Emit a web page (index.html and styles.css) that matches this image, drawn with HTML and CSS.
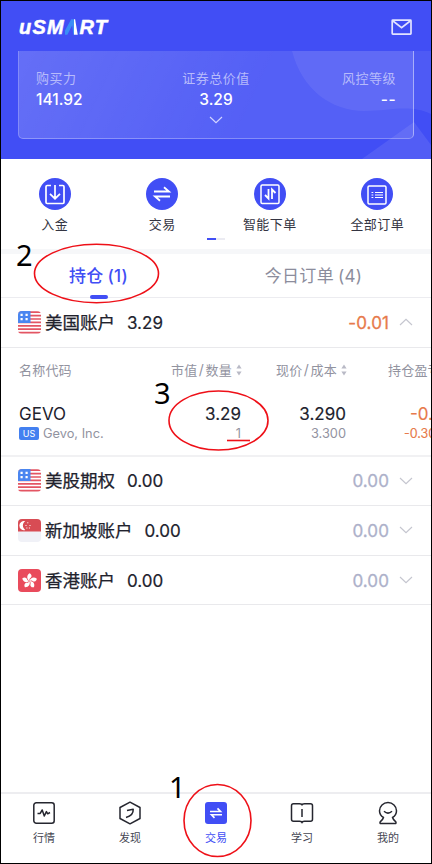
FILE: index.html
```html
<!DOCTYPE html>
<html lang="zh-CN">
<head>
<meta charset="utf-8">
<title>uSMART</title>
<link rel="stylesheet" href="styles.css">
</head>
<body>
<svg width="0" height="0" class="defs">
  <defs>
    <clipPath id="flagclip"><rect width="23" height="23" rx="4"/></clipPath>
    <symbol id="us" viewBox="0 0 23 23">
      <g clip-path="url(#flagclip)">
        <rect width="23" height="23" fill="#fff"/>
        <path d="M0 1.2H23M0 4.6H23M0 8H23M0 11.4H23M0 14.8H23M0 18.2H23M0 21.6H23" stroke="#e35563" stroke-width="1.7"/>
        <rect width="12.5" height="12" fill="#4a86f0"/>
        <path d="M2.500 3.800h2.200M7.500 3.800h2.200M2.500 8.200h2.200M7.500 8.200h2.200" stroke="#fff" stroke-width="2.2"/>
      </g>
    </symbol>
    <symbol id="sg" viewBox="0 0 23 23">
      <g clip-path="url(#flagclip)">
        <rect width="23" height="23" fill="#f0f1f7"/>
        <rect width="23" height="12.5" fill="#d84c54"/>
        <path d="M7.3 2.2a4.6 4.6 0 1 0 0 8.8a5.2 5.2 0 0 1 0-8.8" fill="#fff"/>
        <path d="M9.3 3.8h1M7.5 6.5h1M11.5 6.5h1M8.4 9h1M10.9 9h1" stroke="#fff" stroke-width="1"/>
      </g>
    </symbol>
    <symbol id="hk" viewBox="0 0 23 23">
      <rect width="23" height="23" rx="4" fill="#e94b5c"/>
      <g fill="#fff">
        <path id="petal" d="M11.5 12C8.6 10 8.4 6.4 11.6 4.3C14.1 5.6 14 8 12.4 9.1C11.4 9.8 11.3 10.9 11.5 12"/>
        <use href="#petal" transform="rotate(72 11.5 12)"/>
        <use href="#petal" transform="rotate(144 11.5 12)"/>
        <use href="#petal" transform="rotate(216 11.5 12)"/>
        <use href="#petal" transform="rotate(288 11.5 12)"/>
      </g>
    </symbol>
    <symbol id="down" viewBox="0 0 14 8"><path d="M1 1L7 6.6L13 1" fill="none" stroke="currentColor" stroke-width="1.2"/></symbol>
    <symbol id="sort" viewBox="0 0 6 12"><path d="M3 .4L5.6 4.4H.4ZM3 11.6L5.6 7.6H.4Z" fill="#b9bac6"/></symbol>
  </defs>
</svg>
<div class="screen">
  <header class="topbar">
    <div class="logo">uSM<span class="logo-a">Λ</span>RT</div>
    <svg class="mail" width="22" height="17" viewBox="0 0 22 17" fill="none" stroke="#e2e3ff" stroke-width="1.7"><rect x="1.2" y="1.2" width="18.8" height="14" rx=".6"/><path d="M2 2L10.6 8.7L19.2 2"/></svg>
  </header>

  <section class="hero">
    <svg class="hero-art" width="430" height="108" viewBox="0 0 430 108">
      <path d="M291 0C301 39 331 60 363 60C391 60 408 53 430 63V0Z" fill="#fff" opacity=".07"/>
      <path d="M361 108L413 71L430 94V108Z" fill="#fff" opacity=".09"/>
    </svg>
    <div class="card">
      <div class="stat"><span class="stat-label">购买力</span><span class="stat-value">141.92</span></div>
      <div class="stat stat-mid"><span class="stat-label">证券总价值</span><span class="stat-value">3.29</span><svg class="expand" width="14" height="8"><use href="#down"/></svg></div>
      <div class="stat stat-end"><span class="stat-label">风控等级</span><span class="stat-value dashes">--</span></div>
    </div>
  </section>

  <section class="actions">
    <div class="action">
      <svg width="32" height="32" viewBox="0 0 32 32" fill="none" stroke="#fff" stroke-width="1.7"><circle cx="16" cy="16" r="16" fill="#414ef5" stroke="none"/><path d="M12 7.500H8.200Q7 7.500 7 8.700V24.300Q7 25.500 8.200 25.500H23.800Q25 25.500 25 24.300V8.700Q25 7.500 23.800 7.500H20M16 7V20.500M11 15.800L16 20.700L21 15.800"/></svg>
      <span>入金</span>
    </div>
    <div class="action">
      <svg width="32" height="32" viewBox="0 0 32 32" fill="none" stroke="#fff" stroke-width="1.8"><circle cx="16" cy="16" r="16" fill="#414ef5" stroke="none"/><path d="M8 13.500H23L18 9.200M24 18.500H9L14 22.800"/></svg>
      <span>交易</span>
    </div>
    <div class="action">
      <svg width="32" height="32" viewBox="0 0 32 32" fill="none" stroke="#fff" stroke-width="1.5"><circle cx="16" cy="16" r="16" fill="#414ef5" stroke="none"/><rect x="7" y="7" width="18" height="18.500" rx="1.2"/><path d="M14.500 11V20.500L11 17M18 21V11.500L21.500 15" stroke-width="1.8"/></svg>
      <span>智能下单</span>
    </div>
    <div class="action">
      <svg width="32" height="32" viewBox="0 0 32 32" fill="none" stroke="#fff" stroke-width="1.5"><circle cx="16" cy="16" r="16" fill="#414ef5" stroke="none"/><rect x="7" y="8" width="18" height="18" rx="1.2"/><path d="M10.500 14.500h1.800M14 14.500h8M10.500 17h1.800M14 17h8M10.500 19.500h1.800M14 19.500h8" stroke-width="1.200"/></svg>
      <span>全部订单</span>
    </div>
    <div class="pager"><i></i></div>
  </section>

  <nav class="tabs">
    <div class="tab tab-on">持仓<span>(1)</span></div>
    <div class="tab">今日订单<span>(4)</span></div>
  </nav>

  <div class="account">
    <svg width="23" height="23"><use href="#us"/></svg><span class="name">美国账户</span><span class="total">3.29</span><span class="change loss">-0.01</span><svg class="arrow up" width="14" height="8"><use href="#down"/></svg>
  </div>

  <section class="holdings">
    <div class="line head">
      <span>名称代码</span>
      <span class="num">市值<b>/</b>数量<svg width="6" height="12"><use href="#sort"/></svg></span>
      <span class="num">现价<b>/</b>成本<svg width="6" height="12"><use href="#sort"/></svg></span>
      <span class="more">持仓盈亏</span>
    </div>
    <div class="line main">
      <span>GEVO</span><span class="num">3.29</span><span class="num">3.290</span><span class="more loss">-0.01</span>
    </div>
    <div class="line sub">
      <span class="company"><em>US</em>Gevo, Inc.</span><span class="num">1</span><span class="num">3.300</span><span class="more loss">-0.30%</span>
    </div>
  </section>

  <div class="account">
    <svg width="23" height="23"><use href="#us"/></svg><span class="name">美股期权</span><span class="total">0.00</span><span class="change">0.00</span><svg class="arrow" width="14" height="8"><use href="#down"/></svg>
  </div>
  <div class="account">
    <svg width="23" height="23"><use href="#sg"/></svg><span class="name">新加坡账户</span><span class="total">0.00</span><span class="change">0.00</span><svg class="arrow" width="14" height="8"><use href="#down"/></svg>
  </div>
  <div class="account">
    <svg width="23" height="23"><use href="#hk"/></svg><span class="name">香港账户</span><span class="total">0.00</span><span class="change">0.00</span><svg class="arrow" width="14" height="8"><use href="#down"/></svg>
  </div>

  <footer class="navbar">
    <div class="item">
      <svg width="24" height="24" viewBox="0 0 24 24" fill="none" stroke="#25262f" stroke-width="1.5"><rect x="1.8" y="1.8" width="20.4" height="20.4" rx="2.5"/><path d="M5.500 12.400H8.200L10.200 9L12.300 15L14.400 10.600L15.700 12.800L18 11.500" stroke-linejoin="round"/></svg>
      <span>行情</span>
    </div>
    <div class="item">
      <svg width="24" height="24" viewBox="0 0 24 24" fill="none" stroke="#25262f" stroke-width="1.5" stroke-linejoin="round"><path d="M12 1.200L22 6.500V17.500L12 22.800L2 17.500V6.500Z"/><path d="M9 9.600L15.200 8.200Q15.600 14.300 8 16.500"/></svg>
      <span>发现</span>
    </div>
    <div class="item item-on">
      <svg width="24" height="24" viewBox="0 0 24 24" fill="none" stroke="#fff" stroke-width="1.6"><rect x="1" y="1" width="22" height="22" rx="3" fill="#414ef5" stroke="none"/><path d="M6 10.500H16.500L13.500 7.400M18 13.800H7.500L10.500 16.900"/></svg>
      <span>交易</span>
    </div>
    <div class="item">
      <svg width="24" height="24" viewBox="0 0 24 24" fill="none" stroke="#25262f" stroke-width="1.5" stroke-linejoin="round"><path d="M3.500 2.700H9.500Q12 2.700 12 4Q12 2.700 14.500 2.700H20.500Q22.500 2.700 22.500 4.700V18.300Q22.500 20.300 20.500 20.300H14.500Q12 20.300 12 21.700Q12 20.300 9.500 20.300H3.500Q1.500 20.300 1.500 18.300V4.700Q1.500 2.700 3.500 2.700ZM12 8V16"/></svg>
      <span>学习</span>
    </div>
    <div class="item">
      <svg width="24" height="24" viewBox="0 0 24 24" fill="none" stroke="#25262f" stroke-width="1.5" stroke-linejoin="round"><path d="M7.500 16.500Q3.500 14.200 3.500 9.800A8.500 8.200 0 0 1 20.500 9.800Q20.500 14.200 16.500 16.500Q17 18.500 19.800 20.800Q20.500 22.600 19 22.600H5Q3.500 22.600 4.200 20.800Q7 18.500 7.500 16.500ZM8 10.300Q12 14 16 10.300"/></svg>
      <span>我的</span>
    </div>
  </footer>

  <svg class="marks" width="430" height="862" viewBox="1 1 430 862" fill="none" stroke="#ee1018" stroke-width="1.6">
    <ellipse cx="96.5" cy="273.5" rx="62" ry="29.2"/>
    <ellipse cx="218.5" cy="420.5" rx="49.5" ry="29.5"/>
    <ellipse cx="217.5" cy="820.5" rx="33.5" ry="36"/>
    <path d="M227 440.500H250"/>
  </svg>
  <span class="step step-one">1</span>
  <span class="step step-two">2</span>
  <span class="step step-three">3</span>
</div>
</body>
</html>
```
FILE: styles.css
```css
* { box-sizing: border-box; }
body {
  margin: 0;
  font-family: Inter, "Noto Sans CJK SC", sans-serif;
  color: #21222d;
  background: #fff;
}
svg { display: block; flex: none; }
.defs { position: absolute; }
.screen {
  position: relative;
  display: flex;
  flex-direction: column;
  width: 432px;
  height: 864px;
  border: 1px solid #000;
  overflow: hidden;
}

.topbar {
  display: flex;
  justify-content: space-between;
  flex: none;
  height: 50px;
  padding: 16px 18px 0 18px;
  background: #414ef5;
}
.logo {
  height: 20px;
  font: italic bold 20px/20px "Liberation Sans", sans-serif;
  color: #fff;
  letter-spacing: 1.2px;
  -webkit-text-stroke: .5px currentColor;
  white-space: nowrap;
}
.logo-a {
  color: transparent;
  -webkit-text-stroke: 1.4px transparent;
  background: linear-gradient(90deg, #3b8ef6 62%, #fff 62%);
  -webkit-background-clip: text;
  background-clip: text;
}
.mail { margin-top: 2px; }

.hero {
  position: relative;
  flex: none;
  height: 108px;
  padding: 0 17px 20px;
  background: #414ef5;
}
.hero-art { position: absolute; left: 0; top: 0; }
.card {
  position: relative;
  display: grid;
  grid-template-columns: 1fr 1fr 1fr;
  height: 88px;
  padding: 17px 17px 0;
  border: 1px solid rgba(255, 255, 255, .28);
  border-right-color: rgba(255, 255, 255, .4);
  border-top: 0;
  border-radius: 0 0 5px 5px;
  background: linear-gradient(115deg, rgba(255, 255, 255, .19), rgba(255, 255, 255, .1) 60%, rgba(255, 255, 255, .1));
}
.stat { display: flex; flex-direction: column; }
.stat-mid { align-items: center; }
.stat-end { align-items: flex-end; }
.stat-label { font-size: 13px; line-height: 20px; letter-spacing: .5px; color: #b7bbfb; }
.stat-value { margin-top: 2px; font-size: 15.5px; line-height: 20px; font-weight: 500; color: #fff; }
.dashes { letter-spacing: .4px; }
.expand { margin-top: 6px; color: #d3d5ff; }

.actions {
  position: relative;
  display: grid;
  grid-template-columns: repeat(4, 1fr);
  flex: none;
  height: 95px;
  padding-top: 19px;
  border-bottom: 5px solid #f6f7f9;
}
.action {
  display: flex;
  flex-direction: column;
  align-items: center;
  font-size: 13px;
  line-height: 20px;
  letter-spacing: .4px;
  color: #343542;
}
.action span { margin-top: 4px; }
.pager { position: absolute; left: 206px; bottom: 9px; width: 18px; height: 2px; background: #ebebf2; }
.pager i { display: block; width: 9px; height: 2px; background: #414ef5; }

.tabs {
  display: grid;
  grid-template-columns: 1fr 1fr;
  flex: none;
  height: 44px;
  border-bottom: 1px solid #ececf0;
}
.tab {
  padding-right: 20px;
  text-align: center;
  font-size: 17px;
  line-height: 45px;
  letter-spacing: .3px;
  color: #8c8d9c;
}
.tab span { margin-left: 4px; }
.tab-on { position: relative; font-weight: 500; color: #414ef5; }
.tab-on::after {
  content: "";
  position: absolute;
  left: 89px;
  bottom: 0;
  width: 18px;
  height: 4px;
  border-radius: 2px;
  background: #414ef5;
}

.account {
  display: flex;
  align-items: center;
  flex: none;
  height: 49.6px;
  padding: 0 18px 0 17px;
  border-bottom: 1px solid #e9e9ec;
}
.name {
  margin: -2px 0 0 4px;
  font-size: 17.5px;
  -webkit-text-stroke: .25px currentColor;
}
.total { margin-left: 12px; font-size: 17px; -webkit-text-stroke: .2px currentColor; }
.change { margin-left: auto; font-size: 17px; -webkit-text-stroke: .3px currentColor; letter-spacing: .1px; color: #adb1ca; }
.account .total, .account .change { margin-top: 1px; }
.account .loss { color: #e77a4b; }
.arrow { margin-left: 10px; color: #c5c6cf; }
.up { transform: rotate(180deg); }

.holdings {
  flex: none;
  height: 109px;
  padding-top: 12px;
  border-bottom: 2px solid #f1f1f3;
  overflow: hidden;
}
.line {
  display: grid;
  grid-template-columns: 122px 100px 105px 120px;
  align-items: center;
  padding-left: 18px;
  white-space: nowrap;
}
.num { display: flex; align-items: center; justify-content: flex-end; }
.head { height: 20px; font-size: 13px; letter-spacing: .2px; color: #92939f; }
.head .num { position: relative; left: 1px; }
.head b { margin: 0 1.5px; font-weight: 400; font-size: 14px; }
.head svg { margin-left: 4px; }
.head .more { margin-left: 42px; }
.main { height: 24px; margin-top: 22px; font-size: 17px; }
.main .num { -webkit-text-stroke: .15px currentColor; }
.main .more { margin-left: 64px; }
.sub { height: 16px; font-size: 12.8px; color: #92939f; }
.sub .more { margin-left: 58px; font-size: 12.5px; }
.more.loss { color: #e77a4b; -webkit-text-stroke: .15px currentColor; }
.company { display: flex; align-items: center; }
.company em {
  width: 20px;
  height: 13px;
  margin-right: 4px;
  border-radius: 2px;
  background: #4380f0;
  color: #fff;
  font: normal 9px/13px Inter, sans-serif;
  text-align: center;
}

.navbar {
  display: grid;
  grid-template-columns: repeat(5, 1fr);
  flex: none;
  height: 71px;
  margin-top: auto;
  padding-top: 7px;
  border-top: 2px solid #ededf0;
}
.item {
  display: flex;
  flex-direction: column;
  align-items: center;
  font-size: 11px;
  line-height: 16px;
  color: #454652;
}
.item span { margin-top: 5px; }
.item-on { color: #414ef5; }

.marks { position: absolute; left: 0; top: 0; }
.step { position: absolute; font: 29px/30px "Noto Sans", sans-serif; color: #000; }
.step-one { left: 168px; top: 771px; }
.step-two { left: 15px; top: 239px; }
.step-three { left: 153px; top: 377px; }
```
